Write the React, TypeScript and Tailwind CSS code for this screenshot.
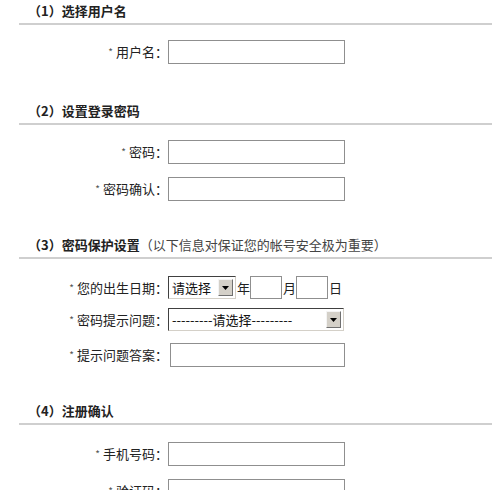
const font = {
  fontFamily: '"Noto Sans CJK SC", "Noto Sans", sans-serif',
};

function SectionHeader({ num, title, note }: { num: number; title: string; note?: string }) {
  return (
    <div className="ml-[19px] mr-[8px] border-b-2 border-[#cfcfcf] pt-[3px] pb-[4px] pl-[9px] text-[13px] leading-[16px] text-[#222]">
      <span className="font-bold">（{num}）{title}</span>
      {note && <span className="font-normal text-[#444]">（以下信息对保证您的帐号安全极为重要）</span>}
    </div>
  );
}

function Label({ text }: { text: string }) {
  return (
    <div className="w-[168px] shrink-0 text-right text-[13px] leading-[16px] text-[#222]">
      <span className="mr-[3px] text-[10px] align-top text-[#555]">*</span>
      {text}：
    </div>
  );
}

function TextInput({ w = "w-[177px]" }: { w?: string }) {
  return <input type="text" className={`${w} h-[24px] border border-[#8f8f8f] bg-white outline-none`} />;
}

function FakeSelect({ w, label }: { w: string; label: string }) {
  return (
    <div className={`${w} h-[23px] flex items-center border border-t-[#404040] border-l-[#404040] border-b-[#d4d0c8] border-r-[#d4d0c8] bg-white`}>
      <span className="flex-1 pl-[3px] text-[13px] leading-[16px] text-[#111] whitespace-nowrap">{label}</span>
      <span className="mr-[2px] flex h-[17px] w-[15px] items-center justify-center border border-t-[#f4f4f4] border-l-[#f4f4f4] border-b-[#707070] border-r-[#707070] bg-[#d4d0c8]">
        <svg width="7" height="4" viewBox="0 0 7 4">
          <path d="M0 0H7L3.5 4Z" fill="#000" />
        </svg>
      </span>
    </div>
  );
}

function Row({ label, children, mt }: { label: string; children: React.ReactNode; mt: string }) {
  return (
    <div className={`flex items-center ${mt}`}>
      <Label text={label} />
      {children}
    </div>
  );
}

export default function App() {
  return (
    <div className="w-[500px] h-[490px] overflow-hidden bg-white" style={font}>
      <SectionHeader num={1} title="选择用户名" />
      <Row label="用户名" mt="mt-[15px]">
        <TextInput />
      </Row>

      <div className="mt-[36px]">
        <SectionHeader num={2} title="设置登录密码" />
      </div>
      <Row label="密码" mt="mt-[15px]">
        <TextInput />
      </Row>
      <Row label="密码确认" mt="mt-[13px]">
        <TextInput />
      </Row>

      <div className="mt-[33px]">
        <SectionHeader num={3} title="密码保护设置" note="1" />
      </div>
      <Row label="您的出生日期" mt="mt-[17px]">
        <FakeSelect w="w-[68px]" label="请选择" />
        <span className="ml-[1px] text-[13px] text-[#222]">年</span>
        <input type="text" className="w-[32px] h-[23px] border border-[#8f8f8f] outline-none" />
        <span className="ml-[1px] text-[13px] text-[#222]">月</span>
        <input type="text" className="w-[32px] h-[23px] border border-[#8f8f8f] outline-none" />
        <span className="ml-[1px] text-[13px] text-[#222]">日</span>
      </Row>
      <Row label="密码提示问题" mt="mt-[9px]">
        <FakeSelect w="w-[176px]" label="---------请选择---------" />
      </Row>
      <Row label="提示问题答案" mt="mt-[12px]">
        <div className="ml-[2px]">
          <TextInput w="w-[175px]" />
        </div>
      </Row>

      <div className="mt-[33px]">
        <SectionHeader num={4} title="注册确认" />
      </div>
      <Row label="手机号码" mt="mt-[17px]">
        <TextInput />
      </Row>
      <Row label="验证码" mt="mt-[13px]">
        <TextInput />
      </Row>
    </div>
  );
}
